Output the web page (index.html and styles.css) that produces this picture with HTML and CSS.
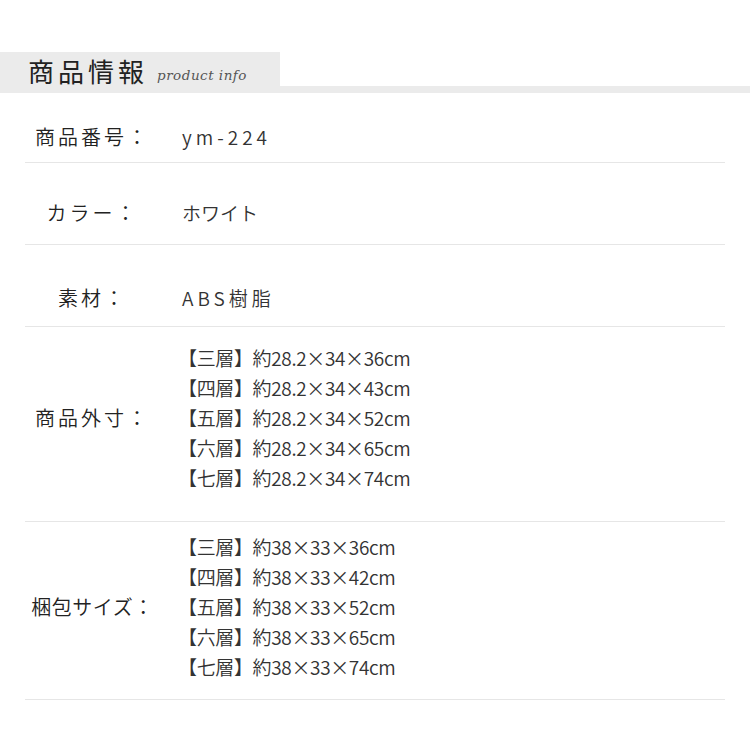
FILE: index.html
```html
<!DOCTYPE html>
<html lang="ja">
<head>
<meta charset="utf-8">
<link rel="stylesheet" href="styles.css">
</head>
<body>
<div class="page">
  <div class="heading">
    <div class="tab">
      <span class="title">商品情報</span>
      <span class="sub">product info</span>
    </div>
    <div class="strip"></div>
  </div>
  <div class="table">
    <div class="row r1">
      <div class="label">商品番号：</div>
      <div class="value spaced">ym-224</div>
    </div>
    <div class="row r2">
      <div class="label">カラー：</div>
      <div class="value tight">ホワイト</div>
    </div>
    <div class="row r3">
      <div class="label">素材：</div>
      <div class="value spaced">ABS樹脂</div>
    </div>
    <div class="row r4">
      <div class="label">商品外寸：</div>
      <div class="value list">
        <div>【三層】約28.2×34×36cm</div>
        <div>【四層】約28.2×34×43cm</div>
        <div>【五層】約28.2×34×52cm</div>
        <div>【六層】約28.2×34×65cm</div>
        <div>【七層】約28.2×34×74cm</div>
      </div>
    </div>
    <div class="row r5">
      <div class="label narrow">梱包サイズ：</div>
      <div class="value list">
        <div>【三層】約38×33×36cm</div>
        <div>【四層】約38×33×42cm</div>
        <div>【五層】約38×33×52cm</div>
        <div>【六層】約38×33×65cm</div>
        <div>【七層】約38×33×74cm</div>
      </div>
    </div>
  </div>
</div>
</body>
</html>
```
FILE: styles.css
```css
html, body {
  margin: 0;
  padding: 0;
  background: #ffffff;
}
body {
  font-family: "Noto Sans CJK JP", "Noto Sans", sans-serif;
  color: #333;
}
.page {
  width: 750px;
  padding-top: 52px;
}
.heading {
  display: flex;
  flex-direction: column;
}
.tab {
  width: 252px;
  height: 34px;
  background: #ebebeb;
  padding-left: 28px;
  display: flex;
  align-items: center;
  gap: 9px;
}
.title {
  font-size: 26px;
  font-weight: 400;
  letter-spacing: 4px;
  color: #222;
  line-height: 34px;
  padding-top: 4px;
}
.sub {
  font-family: "DejaVu Serif", "Liberation Serif", serif;
  font-style: italic;
  font-size: 13.5px;
  color: #555;
  letter-spacing: 0.5px;
  padding-top: 12px;
}
.strip {
  height: 7px;
  background: #ebebeb;
}
.table {
  margin: 0 25px;
}
.row {
  display: flex;
  align-items: center;
  border-bottom: 1px solid #e6e6e6;
}
.label {
  width: 135px;
  text-align: center;
  font-size: 20px;
  font-weight: 350;
  letter-spacing: 3px;
  line-height: 28px;
  color: #222;
  flex-shrink: 0;
  white-space: nowrap;
}
.narrow {
  letter-spacing: 0.5px;
}
.value {
  margin-left: 22px;
  font-size: 19px;
  font-weight: 350;
  color: #333;
  white-space: nowrap;
}
.spaced {
  letter-spacing: 4px;
  line-height: 28px;
}
.tight {
  letter-spacing: 0;
  line-height: 28px;
}
.list {
  line-height: 30px;
  margin-left: 18px;
  letter-spacing: -0.35px;
}
.r1 { padding: 30px 0 11px; }
.r2 { padding: 36px 0 17px; }
.r3 { padding: 39px 0 14px; }
.r4 { padding: 16px 0 28px; }
.r5 { padding: 10px 0 17px; }
```
